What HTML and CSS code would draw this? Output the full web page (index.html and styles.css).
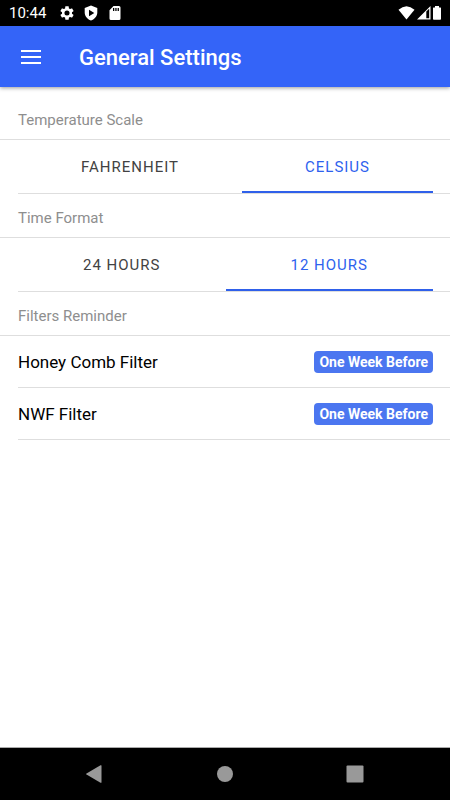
FILE: index.html
```html
<!DOCTYPE html>
<html lang="en">
<head>
<meta charset="utf-8">
<meta name="viewport" content="width=device-width, initial-scale=1">
<title>General Settings</title>
<link rel="stylesheet" href="styles.css">
</head>
<body>
<div class="status">
  <time class="clock">10:44</time>
  <div class="status-left">
    <svg width="16" height="16" viewBox="0 0 24 24" fill="#fff" aria-hidden="true"><path fill-rule="evenodd" d="M19.400 13c.1-.3.1-.6.1-1s0-.7-.1-1l2.200-1.600c.2-.2.3-.4.1-.6l-2-3.500c-.1-.2-.4-.3-.6-.2l-2.500 1c-.5-.4-1.100-.7-1.700-1L14.500 2.400c0-.2-.3-.4-.5-.4h-4c-.2 0-.5.2-.5.4l-.4 2.700c-.6.3-1.200.6-1.700 1l-2.500-1c-.2-.1-.5 0-.6.2l-2 3.500c-.1.2-.1.5.1.6L4.600 11c-.1.3-.1.700-.1 1s0 .7.1 1l-2.200 1.600c-.2.2-.2.4-.1.6l2 3.500c.1.2.4.3.6.2l2.500-1c.5.4 1.100.7 1.700 1l.4 2.700c0 .2.3.4.5.4h4c.2 0 .5-.2.5-.4l.4-2.700c.6-.3 1.200-.6 1.700-1l2.500 1c.2.1.5 0 .6-.2l2-3.500c.1-.2.1-.5-.1-.6L19.400 13zM12 15.800a3.800 3.800 0 1 1 0-7.600 3.800 3.800 0 0 1 0 7.600z"/></svg>
    <svg width="16" height="16" viewBox="0 0 16 16" fill="#fff" aria-hidden="true"><path fill-rule="evenodd" d="M8 .5 14.300 3v4.500c0 3.700-2.500 6.600-6.300 8-3.800-1.400-6.300-4.300-6.300-8V3zM6 4.800v6.400L11.300 8z"/></svg>
    <svg width="16" height="16" viewBox="0 0 16 16" fill="#fff" aria-hidden="true"><path fill-rule="evenodd" d="M6.500 1H12q1.500 0 1.500 1.500v11Q13.500 15 12 15H4q-1.500 0-1.500-1.500V5.300zM6 3v3h1.300V3zm2.300 0v3h1.300V3zm2.300 0v3h1.300V3z"/></svg>
  </div>
  <div class="status-right">
    <svg width="17" height="16" viewBox="0 0 17 16" fill="#fff" aria-hidden="true"><path d="M.5 4.800Q8.500-2.200 16.500 4.800L8.500 14.500z"/></svg>
    <svg width="15" height="16" viewBox="0 0 15 16" fill="#fff" aria-hidden="true"><path fill-rule="evenodd" d="M14.500 1v13.500H1zM10.300 6.500v6.700h2.900V3.800z"/></svg>
    <svg width="10" height="16" viewBox="0 0 10 16" fill="#fff" aria-hidden="true"><path d="M3 1h4v1.500h1.500q.5 0 .5.5v11q0 .8-.8.8H1.800Q1 14.800 1 14V3q0-.5.5-.5H3z"/></svg>
  </div>
</div>
<header class="toolbar">
  <button class="menu" type="button" aria-label="Menu"><svg width="20" height="14" viewBox="0 0 20 14" aria-hidden="true"><path d="M0 1h20M0 7h20M0 13h20" stroke="#fff" stroke-width="2"/></svg></button>
  <h1>General Settings</h1>
</header>
<main>
  <section>
    <h2>Temperature Scale</h2>
    <div class="segment">
      <button type="button">FAHRENHEIT</button>
      <button type="button" class="active" aria-pressed="true">CELSIUS</button>
    </div>
  </section>
  <section>
    <h2>Time Format</h2>
    <div class="segment">
      <button type="button">24 HOURS</button>
      <button type="button" class="active" aria-pressed="true">12 HOURS</button>
    </div>
  </section>
  <section>
    <h2>Filters Reminder</h2>
    <ul>
      <li><span>Honey Comb Filter</span><span class="badge">One Week Before</span></li>
      <li><span>NWF Filter</span><span class="badge">One Week Before</span></li>
    </ul>
  </section>
</main>
<nav class="system">
  <button type="button" aria-label="Back"><svg width="20" height="20" viewBox="0 0 20 20" fill="#999" aria-hidden="true"><path d="M16.500 1.800v16.400q0 1-1 .5L1.500 10.600q-1-.6 0-1.200L15.500 1.300q1-.5 1 .5z"/></svg></button>
  <button type="button" aria-label="Home"><svg width="20" height="20" viewBox="0 0 20 20" fill="#999" aria-hidden="true"><circle cx="10" cy="10" r="8"/></svg></button>
  <button type="button" aria-label="Recent apps"><svg width="20" height="20" viewBox="0 0 20 20" fill="#999" aria-hidden="true"><rect x="1.500" y="1.500" width="17" height="17" rx="1"/></svg></button>
</nav>
</body>
</html>
```
FILE: styles.css
```css
* { box-sizing: border-box; }
body {
  margin: 0;
  min-height: 100vh;
  display: flex;
  flex-direction: column;
  background: #fff;
  color: #000;
  font-family: Roboto, sans-serif;
}
button {
  border: 0;
  padding: 0;
  background: none;
  font: inherit;
  color: inherit;
}
svg { display: block; }
.status {
  display: flex;
  align-items: center;
  height: 26px;
  padding: 0 8px 0 9px;
  background: #000;
  color: #fff;
}
.clock { font-size: 15px; line-height: 28px; }
.status-left { display: flex; gap: 8px; margin-left: 13px; }
.status-right { display: flex; gap: 1px; margin-left: auto; }
.toolbar {
  display: flex;
  align-items: center;
  gap: 38px;
  height: 61px;
  padding: 0 21px;
  background: #3464f8;
  color: #fff;
  box-shadow: 0 1px 4px rgba(0, 0, 0, 0.4);
}
h1 {
  margin: 0;
  padding-top: 2px;
  font-size: 22px;
  line-height: 28px;
  font-weight: 500;
}
main { flex: 1; padding-top: 9px; }
h2 {
  margin: 0;
  height: 44px;
  padding-left: 18px;
  border-bottom: 1px solid #dedede;
  font-size: 15px;
  line-height: 48px;
  font-weight: 400;
  color: #8e8e8e;
}
.segment {
  display: flex;
  height: 54px;
  margin-left: 18px;
  padding-right: 17px;
  border-bottom: 1px solid #dedede;
}
.segment button {
  flex: 1 1 auto;
  padding-top: 2px;
  border-bottom: 2px solid transparent;
  font-size: 15px;
  letter-spacing: 1px;
  color: #424242;
}
.segment .active {
  border-color: #2f60ea;
  color: #2e62ee;
}
ul { margin: 0; padding: 0 0 0 18px; list-style: none; }
li {
  display: flex;
  align-items: center;
  justify-content: space-between;
  height: 52px;
  padding-right: 17px;
  border-bottom: 1px solid #dedede;
  font-size: 17px;
}
.badge {
  padding: 0 5px;
  border-radius: 4px;
  background: #4b76f0;
  color: #fff;
  font-size: 14px;
  line-height: 22px;
  font-weight: 700;
}
.system {
  display: flex;
  justify-content: center;
  gap: 110px;
  height: 53px;
  border-top: 1px solid #aaa;
  background: #000;
}
```
